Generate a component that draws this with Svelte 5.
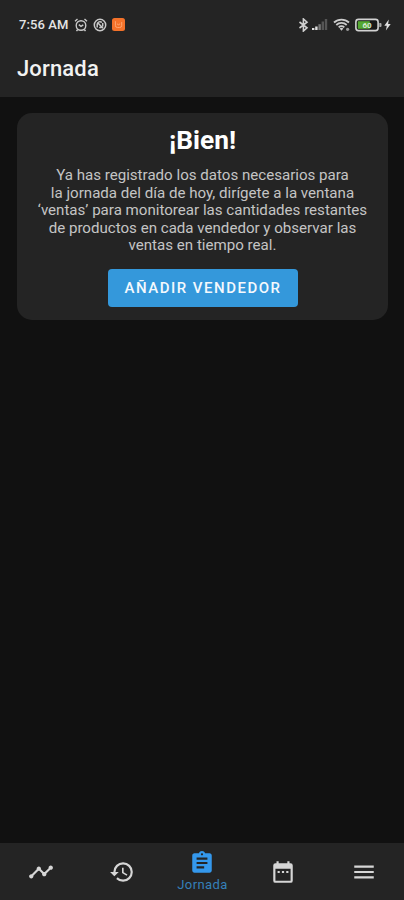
<script lang="ts">
    const tabs = [
        {
            id: 'ventas',
            path: 'M23 8c0 1.1-.9 2-2 2-.18 0-.35-.02-.51-.07l-3.56 3.55c.05.16.07.34.07.52 0 1.1-.9 2-2 2s-2-.9-2-2c0-.18.02-.36.07-.52l-2.55-2.55c-.16.05-.34.07-.52.07s-.36-.02-.52-.07l-4.55 4.56c.05.16.07.33.07.51 0 1.1-.9 2-2 2s-2-.9-2-2 .9-2 2-2c.18 0 .35.02.51.07l4.56-4.55C8.02 9.36 8 9.18 8 9c0-1.1.9-2 2-2s2 .9 2 2c0 .18-.02.36-.07.52l2.55 2.55c.16-.05.34-.07.52-.07s.36.02.52.07l3.55-3.56C19.02 8.35 19 8.18 19 8c0-1.1.9-2 2-2s2 .9 2 2z',
        },
        {
            id: 'historial',
            path: 'M13 3a9 9 0 0 0-9 9H1l3.89 3.89.07.14L9 12H6a7 7 0 1 1 7 7c-1.93 0-3.68-.79-4.94-2.06l-1.42 1.42A8.95 8.95 0 0 0 13 21a9 9 0 0 0 0-18zm-1 5v5l4.28 2.54.72-1.21-3.5-2.08V8H12z',
        },
        {
            id: 'jornada',
            label: 'Jornada',
            path: 'M19 3h-4.18C14.4 1.84 13.3 1 12 1s-2.4.84-2.82 2H5c-1.1 0-2 .9-2 2v14c0 1.1.9 2 2 2h14c1.1 0 2-.9 2-2V5c0-1.1-.9-2-2-2zm-7 0c.55 0 1 .45 1 1s-.45 1-1 1-1-.45-1-1 .45-1 1-1zm2 14H7v-2h7v2zm3-4H7v-2h10v2zm0-4H7V7h10v2z',
        },
        {
            id: 'calendario',
            path: 'M9 11H7v2h2v-2zm4 0h-2v2h2v-2zm4 0h-2v2h2v-2zm2-7h-1V2h-2v2H8V2H6v2H5a2 2 0 0 0-2 2v14a2 2 0 0 0 2 2h14a2 2 0 0 0 2-2V6a2 2 0 0 0-2-2zm0 16H5V9h14v11z',
        },
        { id: 'menu', path: 'M3 18h18v-2H3v2zm0-5h18v-2H3v2zm0-7v2h18V6H3z' },
    ];

    let active = $state('jornada');
</script>

<div class="screen">
    <header>
        <div class="status">
            <span class="time">7:56 AM</span>
            <svg class="alarm" width="14" height="14" viewBox="0 0 14 14">
                <circle cx="7" cy="7.5" r="4.8" />
                <path d="M1 3.2 3.5 1M13 3.2 10.5 1M4.8 6.6 7 8.3l2.3-1.5M3.7 11.5l-1.2 1.7M10.3 11.5l1.2 1.7" />
            </svg>
            <svg class="round" width="14" height="14" viewBox="0 0 14 14">
                <circle cx="7" cy="7" r="5.7" />
                <path d="M4.2 9.5V6.3a2.7 2.7 0 0 1 4.7-1.7M5 5l5 5.2M6.2 9.4h2.5M9.7 5v3.5" />
            </svg>
            <svg class="app" width="13" height="13" viewBox="0 0 13 13">
                <rect width="13" height="13" rx="2.5" fill="#f4722a" />
                <path d="M3.4 3.2v4.3q0 2 2 2h2.3q2 0 2-2V4M5 5.8l1.4 1 1.7-1" fill="none" stroke="#ffab78" stroke-width=".9" />
            </svg>
            <span class="spacer"></span>
            <svg width="11" height="14" viewBox="0 0 11 14">
                <path d="M1.5 4 9 9.8 5.4 13V1L9 4.2 1.5 10" fill="none" stroke="#d0d0d0" stroke-width="1.6" />
            </svg>
            <svg class="signal" width="16" height="13" viewBox="0 0 16 13">
                <path d="M0 10h2.4v2H0zM3.2 8.5h2.4V12H3.2z" fill="#e0e0e0" />
                <path d="M6.4 6.2h2.4V12H6.4z" fill="#777" />
                <path d="M9.6 3.5H12V12H9.6zM12.8 1h2.4v11h-2.4z" fill="#555" />
            </svg>
            <svg class="wifi" width="18" height="14" viewBox="0 0 18 14">
                <path d="M1 4.5a11 11 0 0 1 15 0M3.3 7a7.5 7.5 0 0 1 10.4 0M5.7 9.3a4 4 0 0 1 5.6 0" fill="none" stroke="#ccc" stroke-width="1.8" />
                <path d="m6.6 10.5 1.9 2.3 1.9-2.3a3 3 0 0 0-3.8 0z" fill="#ccc" />
                <circle cx="14.6" cy="11.3" r="1.6" fill="#999" />
            </svg>
            <svg class="battery" width="27" height="14" viewBox="0 0 27 14">
                <rect x=".9" y="1.4" width="22.2" height="11.2" rx="2.6" fill="#171717" stroke="#d2d2d2" stroke-width="1.6" />
                <rect x="2.8" y="3.2" width="12" height="7.6" fill="#55a832" />
                <path d="M24.3 5h1.2q1 0 1 1v2q0 1-1 1h-1.2z" fill="#aaa" />
                <text x="12" y="9.8" text-anchor="middle">60</text>
            </svg>
            <svg class="bolt" width="7" height="12" viewBox="0 0 7 12">
                <path d="M4.8.5.3 6.7h2.5l-.9 4.8 4.8-6.4H4.1z" fill="#e0e0e0" />
            </svg>
        </div>
        <h1>Jornada</h1>
    </header>

    <main>
        <section class="card">
            <h2>¡Bien!</h2>
            <p>
                Ya has registrado los datos necesarios para<br />
                la jornada del día de hoy, dirígete a la ventana<br />
                ‘ventas’ para monitorear las cantidades restantes<br />
                de productos en cada vendedor y observar las<br />
                ventas en tiempo real.
            </p>
            <button class="add">AÑADIR VENDEDOR</button>
        </section>
    </main>

    <nav>
        {#each tabs as tab (tab.id)}
            <button class="tab" class:active={active === tab.id} aria-label={tab.id} onclick={() => (active = tab.id)}>
                <svg width="26" height="26" viewBox="0 0 24 24"><path d={tab.path} /></svg>
                {#if tab.label && active === tab.id}
                    <span>{tab.label}</span>
                {/if}
            </button>
        {/each}
    </nav>
</div>

<style>
    :global(body) {
        background: #111;
    }
    .screen {
        display: flex;
        flex-direction: column;
        height: 900px;
        background: #111;
        color: #f2f2f2;
        font-family: Roboto, sans-serif;
    }
    svg {
        display: block;
        flex: none;
    }
    header {
        box-sizing: border-box;
        height: 97px;
        padding-top: 14px;
        background: #242424;
    }
    .status {
        display: flex;
        align-items: center;
        height: 21px;
        padding: 0 13px 0 19px;
    }
    .time {
        width: 50px;
        font-size: 13px;
        font-weight: 500;
        letter-spacing: 0.1px;
        white-space: nowrap;
        color: #e4e4e4;
    }
    .alarm,
    .round {
        fill: none;
        stroke: #c9c9c9;
        stroke-width: 1.4;
    }
    .alarm {
        margin-left: 5px;
    }
    .round {
        margin-left: 5px;
        stroke-width: 1.5;
    }
    .app {
        margin-left: 5px;
    }
    .spacer {
        flex: 1;
    }
    .signal {
        margin-left: 3px;
    }
    .wifi {
        margin-left: 5px;
    }
    .battery {
        margin-left: 4px;
    }
    .battery text {
        font-size: 8px;
        font-weight: 700;
        fill: #d9e8d2;
    }
    .bolt {
        margin-left: 2px;
    }
    h1 {
        margin: 20px 0 0 17px;
        font-size: 22px;
        font-weight: 500;
        line-height: 28px;
        letter-spacing: 0.15px;
    }
    main {
        flex: 1;
        padding: 16px 16px 0 17px;
    }
    .card {
        display: flex;
        flex-direction: column;
        align-items: center;
        box-sizing: border-box;
        height: 207px;
        padding-top: 11px;
        border-radius: 15px;
        background: #242424;
        text-align: center;
    }
    h2 {
        margin: 0;
        font-size: 26.3px;
        font-weight: 700;
        line-height: 32px;
        color: #fff;
    }
    p {
        margin: 11px 0 0;
        font-size: 15.1px;
        line-height: 17.6px;
        white-space: nowrap;
        color: #c4c4c4;
    }
    .add {
        width: 190px;
        height: 38px;
        margin-top: 14px;
        padding: 1px 0 0 1px;
        border: 0;
        border-radius: 4px;
        background: #3498db;
        color: #f4f9fd;
        font: 500 15px Roboto, sans-serif;
        letter-spacing: 1.5px;
        white-space: nowrap;
    }
    nav {
        display: flex;
        height: 57px;
        padding-left: 1px;
        background: #242424;
    }
    .tab {
        display: flex;
        flex: 1;
        flex-direction: column;
        align-items: center;
        justify-content: center;
        padding: 0;
        border: 0;
        background: none;
        color: #d6d6d6;
        font: 13px Roboto, sans-serif;
    }
    .tab svg {
        fill: currentColor;
    }
    .tab.active {
        color: #3498ec;
    }
    .tab span {
        line-height: 18px;
        letter-spacing: 0.4px;
        color: #3580b8;
    }
</style>
